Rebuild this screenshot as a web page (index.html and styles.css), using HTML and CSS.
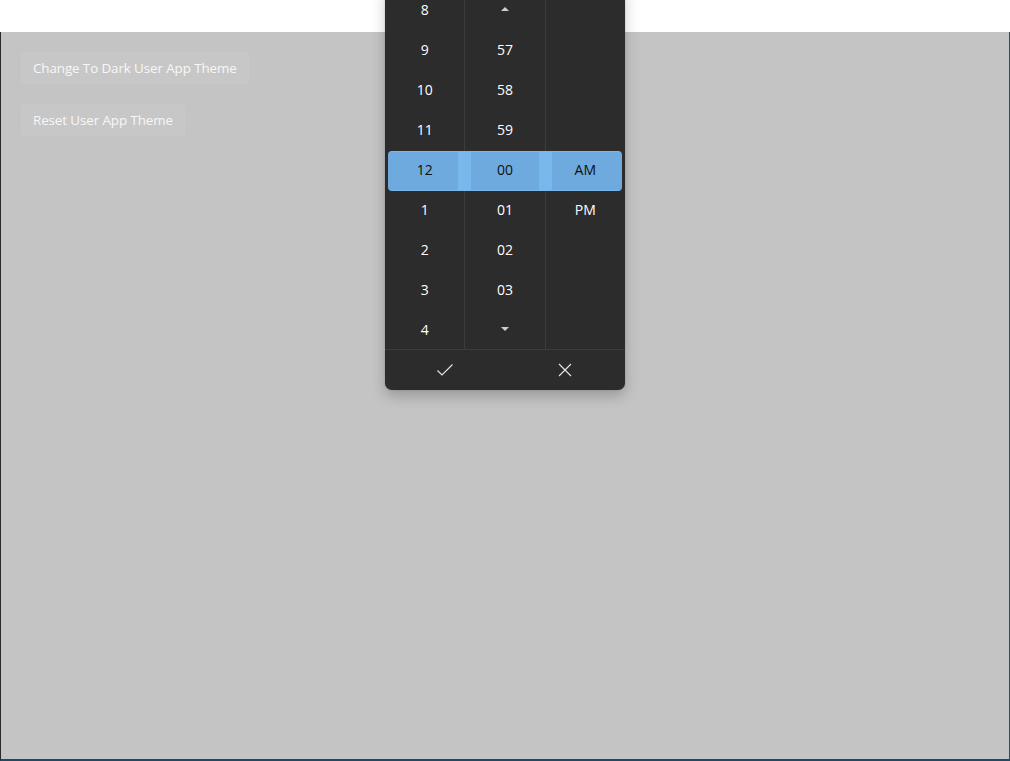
FILE: index.html
```html
<!DOCTYPE html>
<html>
<head>
<meta charset="utf-8">
<link rel="stylesheet" href="styles.css">
</head>
<body>
<div class="titlebar"></div>
<div class="content">
  <button class="btn">Change To Dark User App Theme</button>
  <button class="btn">Reset User App Theme</button>
</div>
<div class="picker">
  <div class="cols">
    <div class="col">
      <div class="cell">8</div><div class="cell">9</div><div class="cell">10</div><div class="cell">11</div>
      <div class="cell sel">12</div>
      <div class="cell">1</div><div class="cell">2</div><div class="cell">3</div><div class="cell">4</div>
    </div>
    <div class="col mid">
      <div class="cell"><span class="tri up"></span></div><div class="cell">57</div><div class="cell">58</div><div class="cell">59</div>
      <div class="cell sel">00</div>
      <div class="cell">01</div><div class="cell">02</div><div class="cell">03</div><div class="cell"><span class="tri down"></span></div>
    </div>
    <div class="col">
      <div class="cell"></div><div class="cell"></div><div class="cell"></div><div class="cell"></div>
      <div class="cell sel">AM</div>
      <div class="cell">PM</div><div class="cell"></div><div class="cell"></div><div class="cell"></div>
    </div>
    <div class="highlight"></div>
  </div>
  <div class="footer">
    <div class="fbtn">
      <svg width="18" height="14" viewBox="0 0 18 14"><path d="M1.5 7.5 L6 12 L16.5 1.5" fill="none" stroke="#e8e8e8" stroke-width="1.1"/></svg>
    </div>
    <div class="fbtn">
      <svg width="14" height="14" viewBox="0 0 14 14"><path d="M1 1 L13 13 M13 1 L1 13" fill="none" stroke="#e8e8e8" stroke-width="1.1"/></svg>
    </div>
  </div>
</div>
</body>
</html>
```
FILE: styles.css
```css
html, body {
  margin: 0;
  padding: 0;
  height: 100%;
  overflow: hidden;
}
body {
  font-family: "Open Sans", "Noto Sans", sans-serif;
  background: #c4c4c4;
  display: flex;
  flex-direction: column;
  position: relative;
}
.titlebar {
  height: 32px;
  background: #ffffff;
  flex: none;
}
.content {
  flex: 1;
  display: flex;
  flex-direction: column;
  align-items: flex-start;
  gap: 20px;
  padding: 20px 20px;
  border-left: 1px solid #2a2a2a;
  border-right: 1px solid #3a4a5a;
  border-bottom: 2px solid #1d4a6a;
}
.btn {
  height: 32px;
  padding: 0 11px 1px 11px;
  background: #c7c7c7;
  border: 1px solid #c9c9c9;
  border-radius: 4px;
  color: #f7f7f7;
  font-family: "Open Sans", "Noto Sans", sans-serif;
  font-size: 13.4px;
  letter-spacing: -0.1px;
}
.picker {
  position: absolute;
  left: 385px;
  top: -11px;
  width: 240px;
  background: #2c2c2c;
  border-radius: 0 0 7px 7px;
  box-shadow: 0 6px 14px rgba(0,0,0,0.22), 0 0 2px rgba(0,0,0,0.2);
  color: #ffffff;
  font-family: "Open Sans", "Noto Sans", sans-serif;
  font-size: 14px;
}
.cols {
  position: relative;
  display: flex;
  border-bottom: 1px solid #3c3c3c;
}
.col {
  width: 80px;
  display: flex;
  flex-direction: column;
}
.col.mid {
  border-left: 1px solid #3c3c3c;
  border-right: 1px solid #3c3c3c;
}
.cell {
  height: 40px;
  display: flex;
  align-items: center;
  justify-content: center;
  position: relative;
  z-index: 2;
}
.cell.sel {
  color: #101010;
}
.highlight {
  position: absolute;
  left: 3px;
  right: 3px;
  top: 162px;
  height: 40px;
  background: #78b8ec;
  border-radius: 4px;
  z-index: 1;
  background-image: linear-gradient(to right,
    #6eaadd 0px, #6eaadd 70px,
    transparent 70px, transparent 83px,
    #6eaadd 83px, #6eaadd 151px,
    transparent 151px, transparent 164px,
    #6eaadd 164px, #6eaadd 234px);
  background-size: 100% 38px;
  background-position: 0 1px;
  background-repeat: no-repeat;
}
.tri {
  width: 0;
  height: 0;
  border-left: 4px solid transparent;
  border-right: 4px solid transparent;
}
.tri.up { border-bottom: 4px solid #cfcfcf; }
.tri.down { border-top: 4px solid #cfcfcf; }
.footer {
  display: flex;
  height: 40px;
}
.fbtn {
  flex: 1;
  display: flex;
  align-items: center;
  justify-content: center;
}
```
